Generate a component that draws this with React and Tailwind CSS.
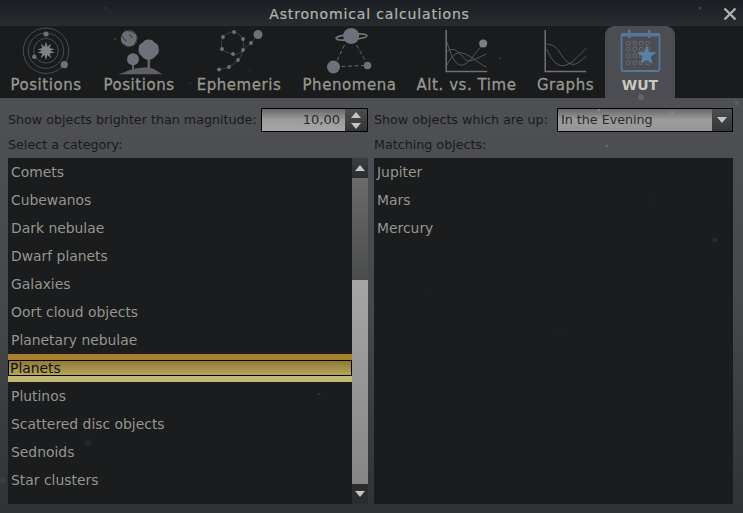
const font = { fontFamily: '"DejaVu Sans", sans-serif' };
const I = "#6f7079";
const L = "#5f6067";

function Box({ x0, y0 = 28, children }) {
  return (
    <svg width="50" height="50" viewBox={`${x0} ${y0} 50 50`} fill="none" className="block overflow-visible">
      {children}
    </svg>
  );
}

function SolarIcon() {
  return (
    <Box x0={21}>
      <circle cx="46" cy="50.700" r="22.700" stroke={L} strokeWidth="0.700" />
      <circle cx="46" cy="50.700" r="17.700" stroke={L} strokeWidth="0.700" />
      <circle cx="46" cy="50.700" r="12.300" stroke={L} strokeWidth="0.700" />
      <path d="M46 41.500l1.500 5.200 3.700-3.300-1.500 4.700 5 1.100-4.500 1.500 4.500 1.900-5 .9 1.600 4.800-3.900-3.200-1.400 5.100-1.400-5.100-3.900 3.200 1.600-4.800-5-.9 4.500-1.900-4.500-1.500 5-1.100-1.500-4.700 3.700 3.300z" fill="#7e7f87" />
      <circle cx="46" cy="34" r="2.600" fill={I} />
      <circle cx="34.300" cy="56.700" r="2.200" fill={I} />
      <circle cx="64.300" cy="64.700" r="3.600" fill={I} />
    </Box>
  );
}
function TreeIcon() {
  return (
    <Box x0={114}>
      <path d="M116.700 74.300c6-.5 11-4 17-5.300 5-1 10-1.700 15-1.300 5 .3 8 3 13.600 6.600z" fill="#5e5f66" />
      <rect x="147.500" y="56" width="2.600" height="14" fill="#62636a" />
      <rect x="132" y="62" width="2" height="9" fill="#62636a" />
      <path d="M148.700 39.500c3 0 4.700 1.200 5.700 3 2.800.8 4.400 3.400 4.200 6 1 3-.4 6-3 7.500-1.700 2.600-4 3.700-6.900 3.700s-5.600-1-7-3.700c-2.700-1.500-3.800-4.500-3-7.500-.2-2.600 1.400-5.200 4.200-6 1-1.800 2.800-3 5.800-3z" fill={I} />
      <circle cx="133" cy="59.300" r="6" fill={I} />
      <circle cx="129" cy="38.500" r="8.300" fill="#6d6e75" />
      <path d="M124 31c3-1 8 0 11 3M121.500 35c1 3 3 5 5 6M130 47c-3 0-5-1-6-3M137 37c0 3-1 6-3 7M129 35c2 0 3 1 3 3" stroke="#34353a" strokeWidth="1" />
      <circle cx="115" cy="39" r="1" fill="#44454b" />
    </Box>
  );
}
function EphemerisIcon() {
  return (
    <Box x0={214}>
      <path d="M219 69.500c5 0 14-4 19-9.500 3-3 4-6.500 5-10l8-7 7-9M233 54c4 1 7-.5 10-4 1-3 1-7 0-11-3-4-5-6-9-7-4-.5-8 2-11 5-2 4-2 8-1 12 3 3 6 4 11 5z" stroke="#505157" strokeWidth="0.700" />
      {[[219,69.500],[229,67],[238,60],[243,50],[251,43],[243,39],[234,32],[223,37],[222,49],[233,54]].map(([x, y], i) => (
        <circle key={i} cx={x} cy={y} r="1.900" fill={I} />
      ))}
      <circle cx="258" cy="34.500" r="4.500" fill={I} />
    </Box>
  );
}
function PhenomenaIcon() {
  return (
    <Box x0={324.500}>
      <path d="M344 45l-8 17M356 45l9 16M341 66.500l22-1" stroke="#66676f" strokeWidth="1" strokeDasharray="4 2.500" />
      <ellipse cx="351" cy="37" rx="15.500" ry="2.800" transform="rotate(-5 351 37)" stroke="#777880" strokeWidth="1.500" />
      <circle cx="350.700" cy="36" r="8" fill={I} />
      <circle cx="333" cy="67" r="6.500" fill={I} />
      <circle cx="367" cy="65.500" r="3.800" fill={I} />
    </Box>
  );
}
function AltIcon() {
  return (
    <Box x0={441.500}>
      <path d="M445.700 30v41.500h41" stroke="#6f7079" strokeWidth="1.500" />
      <path d="M446 41c3 8 6 21 13 24 8 2 15-12 23-20M446 66c4-9 10-15 16-13 8 2 15 10 24 14M446 52c6-6 12-1 18 7 5 5 12-1 22-5" stroke="#64656c" strokeWidth="0.800" />
      <circle cx="482.700" cy="43.500" r="4" fill="#7c7d86" />
    </Box>
  );
}
function GraphIcon() {
  return (
    <Box x0={540.500}>
      <path d="M544.700 30v41.500h41" stroke="#6f7079" strokeWidth="1.500" />
      <path d="M546 49c3 6 7 15 14 16.500 9 2 17-9 26-17.500M546 44c6 .5 10 3 13 8 5 8 10 14 16 12 4-1.500 7-5 11-8" stroke="#64656c" strokeWidth="0.800" />
    </Box>
  );
}
function WutIcon() {
  const c = "#56779a";
  return (
    <Box x0={615}>
      <rect x="621.500" y="34" width="38" height="37" rx="2" stroke={c} strokeWidth="1.800" />
      <path d="M621 33.500h39v3h-39z" fill={c} />
      <path d="M629.300 30v8M649.300 30v8" stroke={c} strokeWidth="2.400" />
      {[41.500, 47.500, 54, 61].map((y) => [626.500, 633, 639.500, 646].map((x) => (
        <rect key={`${x}-${y}`} x={x} y={y} width="3.600" height="3.600" rx="0.800" stroke="#686e78" strokeWidth="0.800" />
      )))}
      <path d="M646.700 45l2.500 6.900 7.300.4-5.800 4.500 2.100 7.100-6.100-4.100-6.100 4.100 2.100-7.100-5.800-4.500 7.300-.4z" fill="#5a80a8" />
    </Box>
  );
}

const tabs = [
  ["Positions", "w-[92px]", <SolarIcon />],
  ["Positions", "w-[94px]", <TreeIcon />],
  ["Ephemeris", "w-[106px]", <EphemerisIcon />],
  ["Phenomena", "w-[115px]", <PhenomenaIcon />],
  ["Alt. vs. Time", "w-[119px]", <AltIcon />],
  ["Graphs", "w-[79px]", <GraphIcon />],
];

const cats = ["Comets","Cubewanos","Dark nebulae","Dwarf planets","Galaxies","Oort cloud objects","Planetary nebulae","Planets","Plutinos","Scattered disc objects","Sednoids","Star clusters"];

function Row({ children }) {
  return <div className="h-7 leading-[28px] pl-[3px] text-[13.9px] text-[#96968f]">{children}</div>;
}

function Arrow({ up }) {
  return (
    <svg width="10" height="6" viewBox="0 0 10 6" className="block">
      <path d={up ? "M5 0l5 6H0z" : "M0 0h10L5 6z"} fill="#c4c4c4" />
    </svg>
  );
}

const stars = [[700,8,1.500,.18],[715,240,2.500,.08],[641,97,3,.18],[737,103,2,.12],[599,110,1.500,.25],[672,112,1.500,.2],[607,146,1.500,.2],[3,480,2.500,.08],[88,443,3.500,.05],[319,394,1.500,.1],[105,8,1,.12],[500,58,1,.15],[190,83,1,.12],[650,200,1,.08],[560,330,1,.07],[430,290,1,.06],[250,70,1,.1]];

export default function App() {
  return (
    <div style={font} className="relative w-[743px] h-[513px] overflow-hidden bg-[#1b1c1d] flex flex-col">
      <div className="h-[26px] shrink-0 relative flex items-center justify-center pt-[2px] pr-[4px] bg-gradient-to-b from-[#1b1f23] to-[#282c31]">
        <span className="text-[14px] tracking-[0.85px] text-[#b4b4ac] [-webkit-text-stroke:0.2px_#b4b4ac] whitespace-nowrap">Astronomical calculations</span>
        <svg width="14" height="14" viewBox="0 0 14 14" className="absolute right-[6px] top-[7px]">
          <path d="M1.500 1.500l11 11M12.500 1.500l-11 11" stroke="#b0b0ac" strokeWidth="2.400" />
        </svg>
      </div>

      <div className="h-[72px] shrink-0 flex bg-[#1a1b1c]">
        {tabs.map(([label, w, icon], i) => (
          <div key={i} className={`${w} shrink-0 flex flex-col items-center`}>
            <div className="h-[50px] pt-[2px]">{icon}</div>
            <div className="text-[15px] tracking-[0.55px] text-[#979790] [-webkit-text-stroke:0.3px_#979790] leading-[18px] whitespace-nowrap">{label}</div>
          </div>
        ))}
        <div className="w-[70px] shrink-0 flex flex-col items-center rounded-t-[9px] bg-[#4b4d52]">
          <div className="h-[50px] pt-[2px]"><WutIcon /></div>
          <div className="text-[14px] font-bold text-[#c9c9c2] leading-[18px]">WUT</div>
        </div>
      </div>

      <div className="flex-1 flex gap-[6px] px-2 bg-gradient-to-b from-[#4e5054] via-[#46484c] to-[#303236] pt-[10px] pb-[9px]">
        <div className="w-[360px] flex flex-col">
          <div className="h-6 flex items-center justify-between">
            <span className="text-[12.7px] text-[#1a1a1a] whitespace-nowrap">Show objects brighter than magnitude:</span>
            <div className="w-[107px] h-6 border border-black flex">
              <div className="flex-1 text-right pr-[5px] text-[13px] leading-[22px] text-[#2a2a2a] bg-gradient-to-b from-[#69696b] via-[#9c9c9c] to-[#a6a6a6]">10,00</div>
              <div className="w-[22px] flex flex-col items-center justify-center gap-[5px] bg-gradient-to-b from-[#4d4e50] to-[#333436]">
                <Arrow up /><Arrow />
              </div>
            </div>
          </div>
          <div className="h-[26px] leading-[26px] text-[12.7px] text-[#1a1a1a]">Select a category:</div>
          <div className="flex h-[346px] w-[360px]">
            <div className="w-[344px] bg-[#1b1c1d] overflow-hidden">
              {cats.map((c) =>
                c === "Planets" ? (
                  <div key={c} className="h-7 flex flex-col">
                    <div className="h-[6px] bg-[#a87f2e]" />
                    <div className="h-4 border border-black leading-[14px] pl-px text-[13.9px] text-[#111] bg-gradient-to-b from-[#8f7a3a] to-[#b5a55c]">{c}</div>
                    <div className="h-[6px] bg-[#c0b873]" />
                  </div>
                ) : <Row key={c}>{c}</Row>
              )}
            </div>
            <div className="w-4 flex flex-col bg-[#3a3b3e]">
              <div className="h-5 flex items-center justify-center bg-gradient-to-b from-[#3b3d41] to-[#2b2c2e]"><Arrow up /></div>
              <div className="h-[102px] bg-gradient-to-b from-[#6b6b6b] to-[#4b4c4d]" />
              <div className="flex-1 bg-gradient-to-b from-[#a6a6a6] to-[#868686]" />
              <div className="h-5 flex items-center justify-center bg-[#2b2c2e]"><Arrow /></div>
            </div>
          </div>
        </div>

        <div className="flex-1 flex flex-col pr-[2px]">
          <div className="h-6 flex items-center justify-between">
            <span className="text-[12.7px] text-[#1a1a1a] whitespace-nowrap">Show objects which are up:</span>
            <div className="w-[176px] h-6 border border-black flex">
              <div className="flex-1 pl-[3px] text-[12.7px] leading-[22px] text-[#2a2a2a] bg-gradient-to-b from-[#69696b] via-[#9c9c9c] to-[#979797]">In the Evening</div>
              <div className="w-5 flex items-center justify-center bg-gradient-to-b from-[#4d4e50] to-[#333436]"><Arrow /></div>
            </div>
          </div>
          <div className="h-[26px] leading-[26px] text-[12.7px] text-[#1a1a1a]">Matching objects:</div>
          <div className="h-[346px] bg-[#1b1c1d]">
            {["Jupiter","Mars","Mercury"].map((m) => <Row key={m}>{m}</Row>)}
          </div>
        </div>
      </div>

      <svg width="743" height="513" className="absolute inset-0 pointer-events-none">
        {stars.map(([x, y, r, o], i) => <circle key={i} cx={x} cy={y} r={r} fill="#c9ced8" opacity={o} />)}
      </svg>
    </div>
  );
}
